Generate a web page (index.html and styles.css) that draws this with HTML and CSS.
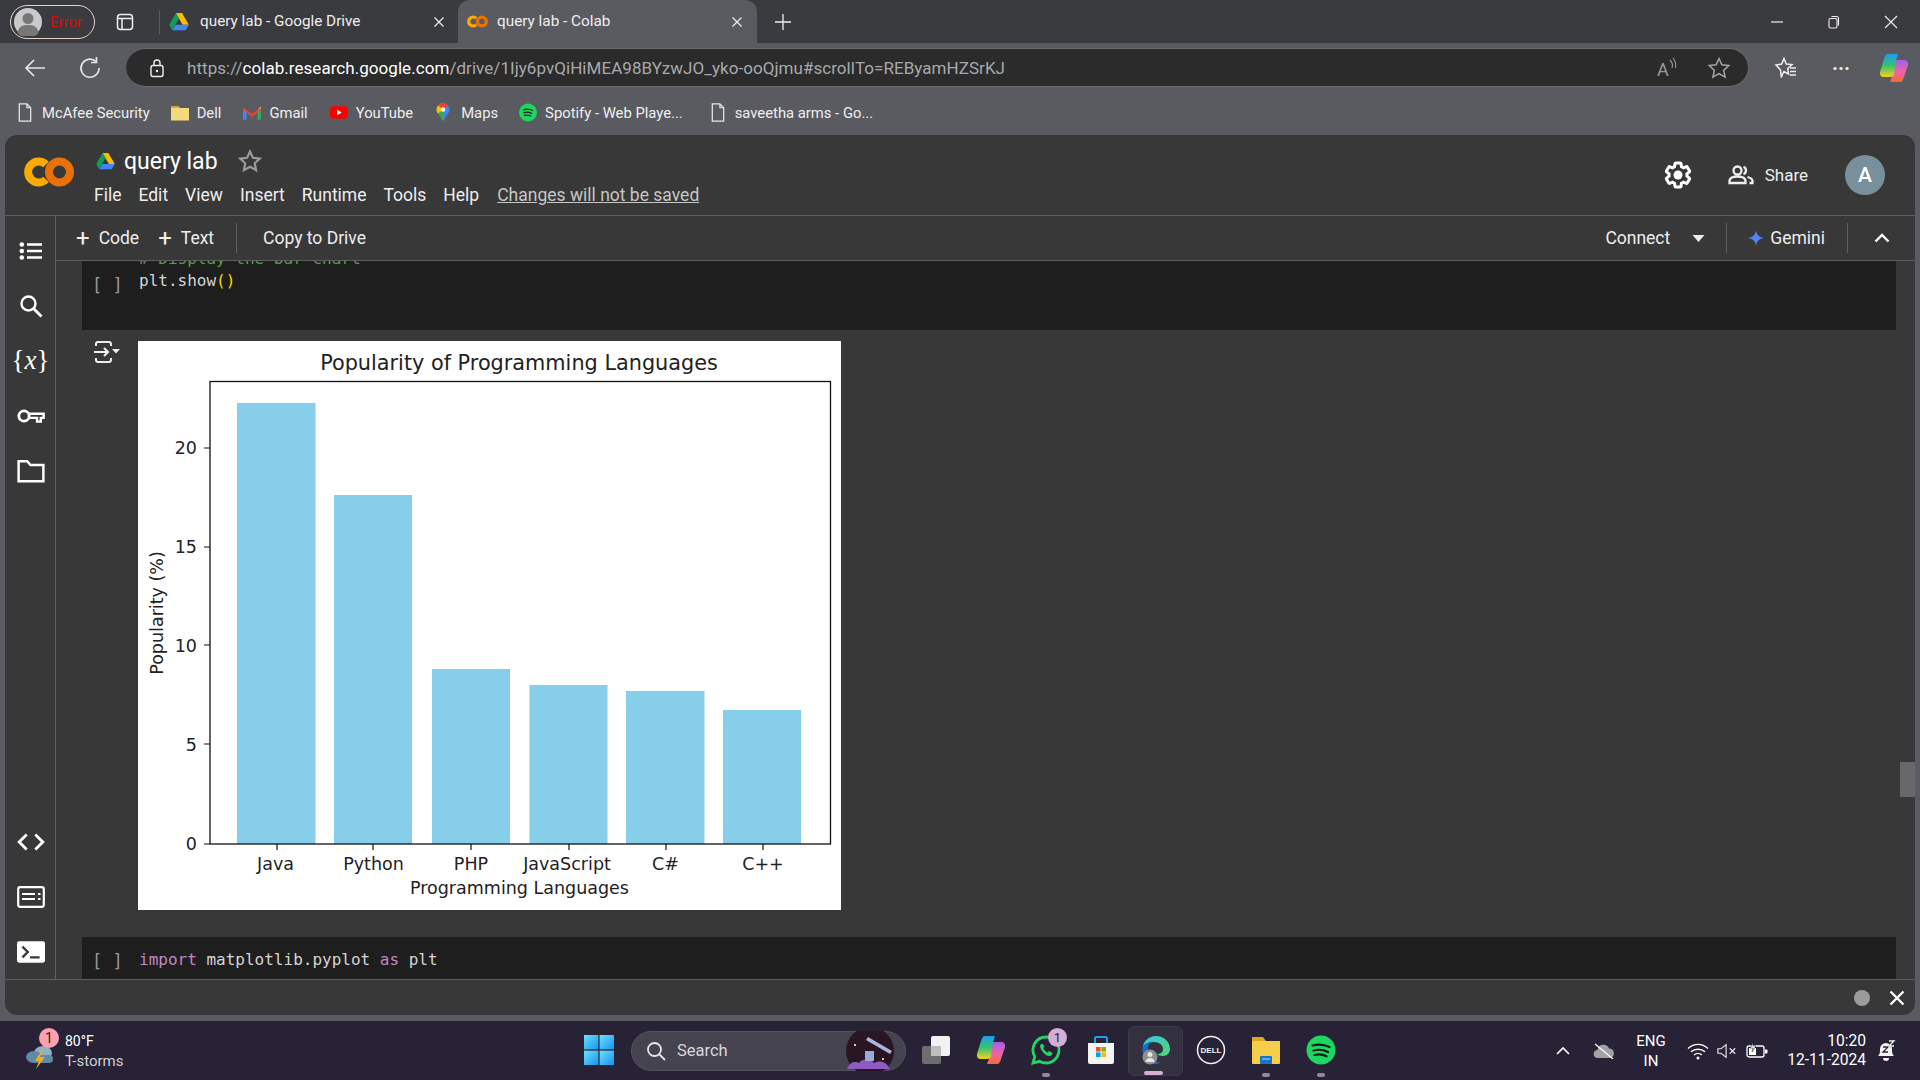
FILE: index.html
```html
<!DOCTYPE html>
<html lang="en">
<head>
  <meta charset="UTF-8" />
  <title>query lab - Colab</title>
  <link rel="stylesheet" href="styles.css">
</head>
<body>
  <svg class="defs" width="0" height="0">
    <defs>
      <linearGradient id="copilotA" x1="0" y1="0" x2="0" y2="1">
        <stop offset="0" stop-color="#1c9cf0"/><stop offset=".5" stop-color="#35c46a"/><stop offset="1" stop-color="#f5d020"/>
      </linearGradient>
      <linearGradient id="copilotB" x1="0" y1="0" x2="0" y2="1">
        <stop offset="0" stop-color="#a45de8"/><stop offset=".55" stop-color="#f063a8"/><stop offset="1" stop-color="#f56a2c"/>
      </linearGradient>
      <linearGradient id="edgeA" x1="0" y1="0" x2="1" y2="1">
        <stop offset="0" stop-color="#34c6e8"/><stop offset="1" stop-color="#52d66c"/>
      </linearGradient>
      <linearGradient id="winA" x1="0" y1="0" x2="1" y2="1">
        <stop offset="0" stop-color="#6fe0fb"/><stop offset="1" stop-color="#1593f0"/>
      </linearGradient>
      <symbol id="drive" viewBox="0 0 24 22">
        <path d="M8.2 0h7.6l8.2 14.3h-7.6z" fill="#fbbc04"/>
        <path d="M8.2 0 0 14.3l3.8 6.7L12 6.7z" fill="#0f9d58"/>
        <path d="M3.8 21h16.4l3.8-6.7H8z" fill="#4285f4"/>
      </symbol>
      <symbol id="colab" viewBox="0 0 50 30">
        <path d="M22 7.500A10.500 10.500 0 1 0 22 22.500" fill="none" stroke="#f9ab00" stroke-width="8"/>
        <circle cx="35.500" cy="15" r="10.500" fill="none" stroke="#e8710a" stroke-width="8"/>
      </symbol>
      <symbol id="page" viewBox="0 0 16 20">
        <path d="M2 1h8l4 4v14H2z" fill="none" stroke="#e8e8e8" stroke-width="1.300"/>
        <path d="M10 1v4h4" fill="none" stroke="#e8e8e8" stroke-width="1.300"/>
      </symbol>
      <symbol id="copilot" viewBox="0 0 30 30">
        <path d="M21 29H11c1-2 2-5 2.500-9L15 9c.5-1.500 2-2 4-2h6c3 0 4.500 2 4 5l-4 12c-.8 3-2 5-4 5z" fill="url(#copilotB)"/>
        <path d="M9 1h10c-1 3-2 6-2.500 10L15 22c-.5 1-2 2-4 2H5c-3 0-4.500-2-4-5L5 6c.8-3 2-5 4-5z" fill="url(#copilotA)"/>
      </symbol>
    </defs>
  </svg>

  <div class="tabstrip">
    <div class="profile-pill">
      <svg class="avatar-mini" viewBox="0 0 28 28"><circle cx="14" cy="14" r="14" fill="#c9c9c9"/><circle cx="14" cy="10.500" r="5.500" fill="#777"/><path d="M3.500 25c1-7 5.500-8 10.500-8s9.500 1 10.500 8a14 14 0 0 1-21 0z" fill="#777"/></svg>
      <span class="profile-error">Error</span>
    </div>
    <svg class="tab-actions" viewBox="0 0 18 18"><rect x="1.500" y="1.500" width="15" height="15" rx="3" fill="none" stroke="#eee" stroke-width="1.500"/><path d="M1.500 5.500h15M6 5.500v11" stroke="#eee" stroke-width="1.500"/></svg>
    <span class="tab-divider"></span>
    <div class="tab">
      <svg class="tab-icon"><use href="#drive"/></svg>
      <span class="tab-title">query lab - Google Drive</span>
      <svg class="tab-close" viewBox="0 0 12 12"><path d="M1.500 1.500l9 9m0-9l-9 9" stroke="#eee" stroke-width="1.200"/></svg>
    </div>
    <div class="tab tab-active">
      <svg class="tab-icon tab-icon-co"><use href="#colab"/></svg>
      <span class="tab-title">query lab - Colab</span>
      <svg class="tab-close" viewBox="0 0 12 12"><path d="M1.500 1.500l9 9m0-9l-9 9" stroke="#eee" stroke-width="1.200"/></svg>
    </div>
    <svg class="tab-new" viewBox="0 0 18 18"><path d="M9 1v16M1 9h16" stroke="#eee" stroke-width="1.300"/></svg>
    <div class="win-controls">
      <svg viewBox="0 0 14 14"><path d="M1 7h12" stroke="#eee" stroke-width="1.200"/></svg>
      <svg viewBox="0 0 14 14"><rect x="2" y="3.500" width="8" height="9.500" rx="1.500" fill="none" stroke="#eee" stroke-width="1.100"/><path d="M4.500 1.500h5a2 2 0 0 1 2 2v7" fill="none" stroke="#eee" stroke-width="1.100"/></svg>
      <svg viewBox="0 0 14 14"><path d="M1 1l12 12m0-12L1 13" stroke="#eee" stroke-width="1.100"/></svg>
    </div>
  </div>

  <div class="addressbar">
    <svg class="nav-back" viewBox="0 0 24 24"><path d="M22 12H3m8-8l-8 8 8 8" fill="none" stroke="#e6e6e6" stroke-width="1.700"/></svg>
    <svg class="nav-reload" viewBox="0 0 24 24"><path d="M18 5.500A9 9 0 1 0 21 12" fill="none" stroke="#e6e6e6" stroke-width="1.700"/><path d="M18.500 1v5.500H13" fill="none" stroke="#e6e6e6" stroke-width="1.700"/></svg>
    <div class="url-pill">
      <svg class="url-lock" viewBox="0 0 16 20"><rect x="2" y="7.500" width="12" height="11" rx="2" fill="none" stroke="#eee" stroke-width="1.400"/><path d="M5 7.500V5a3 3 0 0 1 6 0v2.500" fill="none" stroke="#eee" stroke-width="1.400"/><circle cx="8" cy="13" r="1.200" fill="#eee"/></svg>
      <span class="url-text">https://<b>colab.research.google.com</b>/drive/1Ijy6pvQiHiMEA98BYzwJO_yko-ooQjmu#scrollTo=REByamHZSrKJ</span>
      <svg class="url-read" viewBox="0 0 22 22"><text x="1" y="19" class="read-a">A</text><path d="M14 3c2 2 3 5 2 8M17 1c2.500 3 3.500 6 2.500 10" fill="none" stroke="#9a9a9a" stroke-width="1.100"/></svg>
      <svg class="url-star" viewBox="0 0 24 24"><path d="M12 2.500l2.900 6.300 6.900.8-5.100 4.700 1.400 6.800-6.100-3.400-6.100 3.400 1.400-6.800L2.200 9.600l6.900-.8z" fill="none" stroke="#a8a8a8" stroke-width="1.500"/></svg>
    </div>
    <svg class="bar-fav" viewBox="0 0 24 24"><path d="M10 2.500l2.300 5.500 5.700.6-4.300 3.900.9 5.600L10 15.500l-2 3.500-.7 2.500L6.500 14 2 9l5.700-1z" fill="none" stroke="#eee" stroke-width="1.500"/><path d="M16 12h6m-6 3.500h6m-6 3.500h6" stroke="#eee" stroke-width="1.500"/></svg>
    <span class="bar-more">···</span>
    <svg class="bar-copilot"><use href="#copilot"/></svg>
  </div>

  <div class="bookmarks">
    <span class="bookmark bm-mcafee"><svg class="bm-icon"><use href="#page"/></svg>McAfee Security</span>
    <span class="bookmark bm-dell"><svg class="bm-icon" viewBox="0 0 20 18"><path d="M0 2h8l2 2h10v14H0z" fill="#f4d97a"/><path d="M0 2h8l1 2H0z" fill="#d8a93a"/></svg>Dell</span>
    <span class="bookmark bm-gmail"><svg class="bm-icon" viewBox="0 0 20 16"><path d="M0 3v13h4V6z" fill="#4285f4"/><path d="M20 3v13h-4V6z" fill="#34a853"/><path d="M0 2l10 8 10-8v3l-10 8L0 5z" fill="#ea4335"/><path d="M16 6l4-3V1z" fill="#fbbc04"/></svg>Gmail</span>
    <span class="bookmark bm-yt"><svg class="bm-icon" viewBox="0 0 20 16"><rect y="1" width="20" height="14" rx="4" fill="#f00"/><path d="M8 5l5 3-5 3z" fill="#fff"/></svg>YouTube</span>
    <span class="bookmark bm-maps"><svg class="bm-icon" viewBox="0 0 16 22"><path d="M8 0a7.500 7.500 0 0 1 7.500 7.500c0 2-.8 3.400-1.800 4.800L8 21z" fill="#4285f4"/><path d="M8 0A7.500 7.500 0 0 0 .5 7.500c0 2 .8 3.400 1.800 4.800L8 21z" fill="#34a853"/><path d="M2.600 2.500L8 7.500l-5.700 4.800C1.300 10.900.5 9.500.5 7.500c0-2 .8-3.600 2.100-5z" fill="#fbbc04"/><path d="M8 0c2.500 0 4.700 1.200 6 3L8 7.500 2.600 2.500C4 1 5.900 0 8 0z" fill="#ea4335"/><circle cx="8" cy="7.500" r="2.600" fill="#fff"/></svg>Maps</span>
    <span class="bookmark bm-spotify"><svg class="bm-icon" viewBox="0 0 20 20"><circle cx="10" cy="10" r="10" fill="#1ed760"/><path d="M4.500 7c3.500-1 8-.7 11 1M5 10.300c3-.8 7-.5 9.500 1M5.500 13.300c2.500-.6 5.800-.4 8 .9" fill="none" stroke="#2a2a2a" stroke-width="1.500"/></svg>Spotify - Web Playe...</span>
    <span class="bookmark bm-doc"><svg class="bm-icon"><use href="#page"/></svg>saveetha arms - Go...</span>
  </div>

  <div class="colab">
    <header class="colab-header">
      <svg class="colab-logo"><use href="#colab"/></svg>
      <div class="doc-info">
        <div class="doc-title-row">
          <svg class="doc-drive"><use href="#drive"/></svg>
          <span class="doc-title">query lab</span>
          <svg class="doc-star" viewBox="0 0 24 24"><path d="M12 2.500l2.900 6.300 6.900.8-5.100 4.700 1.400 6.800-6.100-3.400-6.100 3.400 1.400-6.800L2.200 9.600l6.900-.8z" fill="none" stroke="#9a9a9a" stroke-width="2.200"/></svg>
        </div>
        <nav class="menu">
          <span>File</span><span>Edit</span><span>View</span><span>Insert</span><span>Runtime</span><span>Tools</span><span>Help</span>
          <a class="menu-note">Changes will not be saved</a>
        </nav>
      </div>
      <div class="header-right">
        <svg class="gear" viewBox="0 0 24 24"><path d="M19.14,12.94c0.04-0.3,0.06-0.61,0.06-0.94c0-0.32-0.02-0.64-0.07-0.94l2.03-1.58c0.18-0.14,0.23-0.41,0.12-0.61l-1.92-3.32c-0.12-0.22-0.37-0.29-0.59-0.22l-2.39,0.96c-0.5-0.38-1.03-0.7-1.62-0.94L14.4,2.81c-0.04-0.24-0.24-0.41-0.48-0.41h-3.84c-0.24,0-0.43,0.17-0.47,0.41L9.25,5.35C8.66,5.59,8.12,5.92,7.63,6.29L5.24,5.33c-0.22-0.08-0.47,0-0.59,0.22L2.74,8.87C2.62,9.08,2.66,9.34,2.86,9.48l2.03,1.58C4.84,11.36,4.8,11.69,4.8,12s0.02,0.64,0.07,0.94l-2.03,1.58c-0.18,0.14-0.23,0.41-0.12,0.61l1.92,3.32c0.12,0.22,0.37,0.29,0.59,0.22l2.39-0.96c0.5,0.38,1.03,0.7,1.62,0.94l0.36,2.54c0.05,0.24,0.24,0.41,0.48,0.41h3.84c0.24,0,0.44-0.17,0.47-0.41l0.36-2.54c0.59-0.24,1.13-0.56,1.62-0.94l2.39,0.96c0.22,0.08,0.47,0,0.59-0.22l1.92-3.32c0.12-0.22,0.07-0.47-0.12-0.61L19.14,12.94z" fill="none" stroke="#fff" stroke-width="2.400"/><circle cx="12" cy="12" r="3.600" fill="#fff"/></svg>
        <svg class="people" viewBox="0 0 26 20"><circle cx="9.500" cy="5.500" r="4" fill="none" stroke="#eee" stroke-width="2.300"/><path d="M1.500 18v-2c0-3 4-4.500 8-4.500s8 1.500 8 4.500v2z" fill="none" stroke="#eee" stroke-width="2.300"/><path d="M15.500 1.800a4 4 0 0 1 0 7.400M19.500 12c2.500.7 5 2 5 4v2h-3" fill="none" stroke="#eee" stroke-width="2.300"/></svg>
        <span class="share-label">Share</span>
        <span class="avatar">A</span>
      </div>
    </header>

    <div class="colab-main">
      <aside class="sidebar">
        <div class="side-group">
          <div class="side-slot"><svg viewBox="0 0 24 24"><path d="M8 5.500h15M8 12h15M8 18.500h15" stroke="#fff" stroke-width="2.400"/><circle cx="2.800" cy="5.500" r="2.300" fill="#fff"/><circle cx="2.800" cy="12" r="2.300" fill="#fff"/><circle cx="2.800" cy="18.500" r="2.300" fill="#fff"/></svg></div>
          <div class="side-slot"><svg viewBox="0 0 24 24"><circle cx="9.500" cy="9.500" r="7" fill="none" stroke="#fff" stroke-width="2.400"/><path d="M14.500 14.500l8 8" stroke="#fff" stroke-width="2.800"/></svg></div>
          <div class="side-slot side-var">{<i>x</i>}</div>
          <div class="side-slot"><svg viewBox="0 0 30 18"><circle cx="7.500" cy="9" r="5.500" fill="none" stroke="#fff" stroke-width="3"/><path d="M13 6.500h15.500v4.500h-3v4h-4v-4H13" fill="none" stroke="#fff" stroke-width="2.600"/></svg></div>
          <div class="side-slot"><svg viewBox="0 0 26 22"><path d="M1.500 2h8l3 3.500h12v15h-23z" fill="none" stroke="#fff" stroke-width="2.300"/></svg></div>
        </div>
        <div class="side-group">
          <div class="side-slot"><svg viewBox="0 0 26 18"><path d="M9 2L2 9l7 7M17 2l7 7-7 7" fill="none" stroke="#fff" stroke-width="2.600"/></svg></div>
          <div class="side-slot"><svg viewBox="0 0 28 22"><rect x="1.200" y="1.200" width="25.600" height="19.600" rx="2" fill="none" stroke="#fff" stroke-width="2.200"/><path d="M5 8h13M5 13h13M21 8h2.500M21 13h2.500" stroke="#fff" stroke-width="2.200"/></svg></div>
          <div class="side-slot"><svg viewBox="0 0 26 20"><rect width="26" height="20" rx="2" fill="#fff"/><path d="M5 5l5 5-5 5" fill="none" stroke="#383838" stroke-width="2.200"/><path d="M12 15h9" stroke="#383838" stroke-width="2.200"/></svg></div>
        </div>
      </aside>

      <div class="workspace">
        <div class="toolbar">
          <span class="tool tool-code"><i class="plus">+</i>Code</span>
          <span class="tool tool-text"><i class="plus">+</i>Text</span>
          <span class="tool-sep tool-sep-left"></span>
          <span class="tool tool-drive">Copy to Drive</span>
          <span class="tool tool-connect">Connect</span>
          <svg class="tool-caret" viewBox="0 0 12 7"><path d="M0 0h12L6 7z" fill="#eee"/></svg>
          <span class="tool-sep tool-sep-a"></span>
          <svg class="tool-spark" viewBox="0 0 16 16"><path d="M8 0c.6 4.500 2.500 7 8 8-5.500 1-7.400 3.500-8 8-.6-4.500-2.500-7-8-8 5.500-1 7.400-3.500 8-8z" fill="#4f86f7"/></svg>
          <span class="tool tool-gemini">Gemini</span>
          <span class="tool-sep tool-sep-b"></span>
          <svg class="tool-chevron" viewBox="0 0 16 10"><path d="M1.500 8.500L8 2l6.500 6.500" fill="none" stroke="#fff" stroke-width="2.400"/></svg>
        </div>

        <div class="notebook">
          <div class="cell cell-first">
            <div class="gutter">[ ]</div>
            <pre class="code code-scrolled"><span class="c-comment"># Display the bar chart</span>
plt.show<span class="c-paren">()</span></pre>
          </div>

          <div class="output">
            <div class="output-gutter">
              <svg viewBox="0 0 28 22"><path d="M3 5V3a2 2 0 0 1 2-2h11a2 2 0 0 1 2 2v2M3 17v2a2 2 0 0 0 2 2h11a2 2 0 0 0 2-2v-2" fill="none" stroke="#eee" stroke-width="2.100"/><path d="M1 11h14m-4-4l4 4-4 4" fill="none" stroke="#eee" stroke-width="2.100"/><path d="M19 8h8l-4 4.500z" fill="#eee"/></svg>
            </div>
            <svg class="chart" viewBox="138 341 703 569">
              <rect x="138" y="341" width="703" height="569" fill="#fff"/>
              <g fill="#87ceeb">
                <rect x="237" y="403" width="78.500" height="441"/>
                <rect x="334" y="495" width="78" height="349"/>
                <rect x="432" y="669" width="78" height="175"/>
                <rect x="529.500" y="685" width="78" height="159"/>
                <rect x="626" y="691" width="78.500" height="153"/>
                <rect x="723" y="710" width="78" height="134"/>
              </g>
              <rect x="210" y="381.500" width="620.500" height="462.500" fill="none" stroke="#111" stroke-width="1.300"/>
              <g stroke="#111" stroke-width="1.200">
                <path d="M204 448h6M204 547h6M204 645h6M204 744h6M204 844h6"/>
                <path d="M277 844v6M373 844v6M471 844v6M569 844v6M666 844v6M763 844v6"/>
              </g>
              <text class="chart-title" x="519" y="370">Popularity of Programming Languages</text>
              <g class="chart-y">
                <text x="197" y="454">20</text>
                <text x="197" y="553">15</text>
                <text x="197" y="652">10</text>
                <text x="197" y="751">5</text>
                <text x="197" y="850">0</text>
              </g>
              <g class="chart-x">
                <text x="275.500" y="870">Java</text>
                <text x="373.500" y="870">Python</text>
                <text x="471" y="870">PHP</text>
                <text x="567" y="870">JavaScript</text>
                <text x="665.500" y="870">C#</text>
                <text x="763" y="870">C++</text>
              </g>
              <text class="chart-xlabel" x="519.500" y="894">Programming Languages</text>
              <text class="chart-ylabel" transform="translate(163 613) rotate(-90)">Popularity (%)</text>
            </svg>
          </div>

          <div class="cell cell-last">
            <div class="gutter">[ ]</div>
            <pre class="code"><span class="c-key">import</span> matplotlib.pyplot <span class="c-key">as</span> plt</pre>
          </div>

          <div class="scroll-thumb"></div>
        </div>
      </div>
    </div>

    <footer class="statusbar">
      <span class="status-dot"></span>
      <svg class="status-close" viewBox="0 0 16 16"><path d="M1.500 1.500l13 13m0-13l-13 13" stroke="#fff" stroke-width="2.300"/></svg>
    </footer>
  </div>

  <div class="taskbar">
    <div class="weather">
      <svg class="weather-icon" viewBox="0 0 30 30"><ellipse cx="18" cy="13" rx="9" ry="7" fill="#8fb0c9"/><ellipse cx="9" cy="17" rx="8" ry="6" fill="#5f8aa8"/><rect x="6" y="15" width="22" height="8" rx="4" fill="#5f8aa8"/><path d="M17 10l-7 11h4l-3 8 9-12h-5l3-7z" fill="#f7a81b"/></svg>
      <span class="weather-badge">1</span>
      <div class="weather-text"><span class="weather-temp">80°F</span><span class="weather-desc">T-storms</span></div>
    </div>
    <div class="task-slot task-start">
      <svg viewBox="0 0 30 30"><rect width="14.400" height="14.400" x="0" y="0" fill="url(#winA)"/><rect width="14.400" height="14.400" x="15.600" y="0" fill="url(#winA)"/><rect width="14.400" height="14.400" x="0" y="15.600" fill="url(#winA)"/><rect width="14.400" height="14.400" x="15.600" y="15.600" fill="url(#winA)"/></svg>
    </div>
    <div class="task-search">
      <svg class="search-icon" viewBox="0 0 20 20"><circle cx="8.500" cy="8.500" r="6.500" fill="none" stroke="#e6e6e6" stroke-width="1.800"/><path d="M13 13l6 6" stroke="#e6e6e6" stroke-width="1.800"/></svg>
      <span class="search-label">Search</span>
      <svg class="search-art" viewBox="0 0 54 40"><circle cx="27" cy="20" r="24" fill="#2a1622"/><path d="M4 38c3-8 9-8 12-6 4-5 12-4 15 0 5-3 12-2 16 6z" fill="#8d5cc0"/><path d="M25 6l24 14-2 3L23 9z" fill="#a9b6dd"/><rect x="22" y="20" width="9" height="10" fill="#9aa9d8"/><circle cx="12" cy="14" r="1" fill="#fff"/><circle cx="40" cy="28" r="1" fill="#fff"/></svg>
    </div>
    <div class="task-slot">
      <svg viewBox="0 0 30 30"><rect x="1" y="11" width="19" height="18" rx="2" fill="#6d6d6d"/><rect x="10" y="1" width="19" height="20" rx="2" fill="#f2f2f2"/><rect x="10" y="11" width="10" height="10" fill="#bdbdbd"/></svg>
    </div>
    <div class="task-slot"><svg><use href="#copilot"/></svg></div>
    <div class="task-slot task-open">
      <svg viewBox="0 0 30 30"><path d="M15 2a13 13 0 0 1 0 26 13 13 0 0 1-6.500-1.700L2 28l1.800-6.400A13 13 0 0 1 15 2z" fill="none" stroke="#25d366" stroke-width="2.800"/><path d="M10 9c-1.500 1.500-1 4 1 7s5 5 7.500 5c2 0 3-1.500 3-3l-3.500-2-1.500 1.500c-2-1-3.500-2.700-4.300-4.500L13.500 11.500 12 9z" fill="#25d366"/></svg>
      <span class="task-badge">1</span>
    </div>
    <div class="task-slot">
      <svg viewBox="0 0 30 30"><path d="M9 8V3.500A1.500 1.500 0 0 1 10.500 2h9A1.500 1.500 0 0 1 21 3.500V8" fill="none" stroke="#1aa3e8" stroke-width="2"/><path d="M2 8h26v19a2 2 0 0 1-2 2H4a2 2 0 0 1-2-2z" fill="#f4f4f4"/><rect x="10" y="12" width="4.600" height="4.600" fill="#f25022"/><rect x="15.400" y="12" width="4.600" height="4.600" fill="#7fba00"/><rect x="10" y="17.400" width="4.600" height="4.600" fill="#00a4ef"/><rect x="15.400" y="17.400" width="4.600" height="4.600" fill="#ffb900"/></svg>
    </div>
    <div class="task-slot task-edge">
      <svg viewBox="0 0 30 30"><path d="M15 1c8 0 14 6 14 13 0 4-3 7-7 7-3 0-5-1-6-2 4 0 6-2 6-5 0-4-4-7-9-7C7 7 2 10 1.500 14 2 6 8 1 15 1z" fill="url(#edgeA)"/><path d="M1.500 14C2 9 7 7 11 7c-4 2-5 6-4 11 1 5 6 10 13 9-2 1-3.500 2-6 2C7 29 1 22 1.500 14z" fill="#1471c9"/><circle cx="9" cy="22" r="7.500" fill="#8f8f8f"/><circle cx="9" cy="19.500" r="2.500" fill="#e6e6e6"/><path d="M4.500 27c.5-3 2-4 4.500-4s4 1 4.500 4z" fill="#e6e6e6"/></svg>
    </div>
    <div class="task-slot">
      <svg viewBox="0 0 30 30"><circle cx="15" cy="15" r="13.500" fill="none" stroke="#f2f2f2" stroke-width="1.500"/><text x="15" y="18" class="dell-text">DELL</text></svg>
    </div>
    <div class="task-slot task-open">
      <svg viewBox="0 0 30 30"><path d="M1 2h11l3 4h14v3H1z" fill="#e3a51a"/><rect x="1" y="6" width="28" height="23" rx="1" fill="#f6cf4a"/><rect x="9" y="21" width="12" height="8" rx="1" fill="#1576c9"/><path d="M11 24h8" stroke="#9fd0f5" stroke-width="1.200"/></svg>
    </div>
    <div class="task-slot task-open">
      <svg viewBox="0 0 30 30"><circle cx="15" cy="15" r="14.500" fill="#1ed760"/><path d="M6.500 10.500c5.500-1.500 12-1 17 1.500M7.500 15.500c4.500-1.200 10-.8 14.500 1.500M8.500 20c4-1 8.500-.6 12 1.300" fill="none" stroke="#1b1b1b" stroke-width="2.200" stroke-linecap="round"/></svg>
    </div>

    <div class="tray">
      <svg class="tray-chevron" viewBox="0 0 14 9"><path d="M1 8l6-6 6 6" fill="none" stroke="#fff" stroke-width="1.600"/></svg>
      <svg class="tray-cloud" viewBox="0 0 22 16"><path d="M5 15a4 4 0 0 1-.5-8A6 6 0 0 1 16 5.500 4.800 4.800 0 0 1 17 15z" fill="#a2a2a6"/><path d="M2 1l18 15" stroke="#fff" stroke-width="1.200"/></svg>
      <div class="tray-lang"><span>ENG</span><span>IN</span></div>
      <svg class="tray-wifi" viewBox="0 0 22 18"><path d="M1 6.500c6-5.500 14-5.500 20 0M4 9.800c4-3.500 10-3.500 14 0M7 13c2.500-2 5.500-2 8 0" fill="none" stroke="#fff" stroke-width="1.400"/><circle cx="11" cy="16" r="1.500" fill="#fff"/></svg>
      <svg class="tray-vol" viewBox="0 0 22 16"><path d="M1 5.500h3.500L10 1v14l-5.500-4.500H1z" fill="none" stroke="#e6e6e6" stroke-width="1.300"/><path d="M14 5l6 6m0-6l-6 6" stroke="#e6e6e6" stroke-width="1.300"/></svg>
      <svg class="tray-batt" viewBox="0 0 22 16"><rect x="1" y="3" width="17" height="11" rx="2" fill="none" stroke="#fff" stroke-width="1.300"/><rect x="3" y="5" width="7" height="7" fill="#fff"/><path d="M19 6.500h1.500a1 1 0 0 1 1 1v2a1 1 0 0 1-1 1H19z" fill="#fff"/><path d="M7 0L4 5h3l-1 4 4-6H7z" fill="#fff" stroke="#272235" stroke-width=".6"/></svg>
      <div class="tray-clock"><span>10:20</span><span>12-11-2024</span></div>
      <svg class="tray-bell" viewBox="0 0 20 22"><path d="M2 16c2-2 2-4 2-7a6 6 0 0 1 12 0c0 3 0 5 2 7z" fill="#f4f4f4"/><path d="M7 18h6a3 3 0 0 1-6 0z" fill="#f4f4f4"/><path d="M7 7h5l-5 5h5M13 1h5l-5 5h5" fill="none" stroke="#272235" stroke-width="1.300"/><path d="M13 1h5l-5 5h5" fill="none" stroke="#f4f4f4" stroke-width="1.300"/></svg>
    </div>
  </div>
</body>
</html>
```

FILE: styles.css
```css
* { box-sizing: border-box; }
html, body { margin: 0; height: 100%; }
body { width: 1920px; height: 1080px; overflow: hidden; display: flex; flex-direction: column; background: #5a5b60; font-family: Roboto, "Liberation Sans", sans-serif; color: #eee; }
svg { display: block; flex: none; }
.defs { position: absolute; }

/* browser tabs */
.tabstrip { height: 43px; flex: none; display: flex; align-items: center; background: #3a3b3f; padding-left: 10px; }
.profile-pill { width: 85px; height: 34px; border: 1px solid #e7d3c6; border-radius: 17px; display: flex; align-items: center; padding-left: 3px; }
.avatar-mini { width: 28px; height: 28px; }
.profile-error { margin-left: 8px; color: #d40d0d; font-size: 15px; }
.tab-actions { width: 18px; height: 18px; margin-left: 21px; }
.tab-divider { width: 1px; height: 24px; background: #5a5b60; margin-left: 25px; }
.tab { width: 299px; height: 43px; display: flex; align-items: center; position: relative; }
.tab-icon { width: 20px; height: 18px; margin-left: 9px; }
.tab-icon-co { width: 21px; height: 13px; }
.tab-title { font-size: 15.300px; margin: -2px 0 0 11px; flex: 1; }
.tab-close { width: 12px; height: 12px; margin-right: 14px; }
.tab-active { background: #5a5b60; border-radius: 12px 12px 0 0; height: 43px; margin-left: -1px; }
.tab-active .tab-title { margin-left: 9px; }
.tab-new { width: 18px; height: 18px; margin-left: 17px; }
.win-controls { margin-left: auto; display: flex; align-items: center; gap: 43px; padding-right: 22px; }
.win-controls svg { width: 14px; height: 14px; }

/* address bar */
.addressbar { height: 49px; flex: none; display: flex; align-items: center; }
.nav-back { width: 24px; height: 24px; margin-left: 23px; }
.nav-reload { width: 24px; height: 24px; margin-left: 31px; }
.url-pill { width: 1623px; height: 39px; margin-left: 24px; border-radius: 20px; background: #2b2b2b; border: 1px solid #6a6a6a; border-width: 1px 1px 1px 0; display: flex; align-items: center; padding-left: 23px; }
.url-lock { width: 16px; height: 20px; }
.url-text { margin-left: 22px; font-size: 17px; color: #a7a9ad; flex: 1; white-space: nowrap; letter-spacing: .05px; }
.url-text b { font-weight: 400; color: #fff; }
.url-read { width: 22px; height: 22px; margin-right: 29px; }
.read-a { font: 18px Roboto, sans-serif; fill: #9a9a9a; }
.url-star { width: 24px; height: 24px; margin-right: 17px; }
.bar-fav { width: 24px; height: 24px; margin-left: 25px; }
.bar-more { width: 24px; margin-left: 31px; font-size: 20px; font-weight: 700; text-align: center; }
.bar-copilot { width: 30px; height: 30px; margin-left: 26px; }

/* bookmarks */
.bookmarks { height: 43px; flex: none; display: flex; align-items: center; padding: 0 0 2px 16px; font-size: 14.800px; }
.bookmark { display: flex; align-items: center; white-space: nowrap; }
.bm-icon { width: 18px; height: 19px; margin-right: 8px; }
.bm-dell { margin-left: 21px; }
.bm-gmail { margin-left: 22px; }
.bm-yt { margin-left: 22px; }
.bm-maps { margin-left: 23px; }
.bm-spotify { margin-left: 21px; }
.bm-doc { margin-left: 26px; }
.bm-maps .bm-icon { width: 14px; margin-right: 11px; }

/* colab card */
.colab { height: 880px; flex: none; margin: 0 5px 6px; background: #383838; border-radius: 12px; display: flex; flex-direction: column; overflow: hidden; }
.colab-header { height: 81px; flex: none; display: flex; border-bottom: 1px solid #5f5f5f; padding-left: 19px; }
.colab-logo { width: 50px; height: 30px; margin-top: 22px; }
.doc-info { margin-left: 20px; }
.doc-title-row { display: flex; align-items: center; height: 24px; margin-top: 14px; }
.doc-drive { width: 19px; height: 17px; margin-left: 2px; }
.doc-title { font-size: 23px; margin-left: 9px; color: #fff; }
.doc-star { width: 24px; height: 24px; margin-left: 20px; }
.menu { display: flex; align-items: center; margin-top: 12px; font-size: 17.500px; gap: 17px; }
.menu-note { color: #c4c7c5; text-decoration: underline; margin-left: 1px; }
.header-right { margin-left: auto; display: flex; align-items: center; padding-right: 30px; height: 80px; }
.gear { width: 30px; height: 30px; }
.people { width: 26px; height: 20px; margin-left: 35px; }
.share-label { font-size: 17px; margin-left: 11px; }
.avatar { width: 40px; height: 40px; border-radius: 50%; background: #78909c; margin-left: 37px; color: #fff; font-size: 21px; font-weight: 500; display: flex; align-items: center; justify-content: center; }

.colab-main { flex: 1; display: flex; min-height: 0; }
.sidebar { width: 51px; flex: none; border-right: 1px solid #5f5f5f; display: flex; flex-direction: column; justify-content: space-between; padding: 7px 0 0 1px; }
.side-slot { height: 55px; display: flex; align-items: center; justify-content: center; }
.side-slot svg { width: 28px; height: 24px; }
.side-var { font: 27px "Liberation Serif", serif; color: #fff; }

.workspace { flex: 1; min-width: 0; display: flex; flex-direction: column; }
.toolbar { height: 45px; flex: none; display: flex; align-items: center; border-bottom: 1px solid #5f5f5f; font-size: 17.500px; }
.tool { display: flex; align-items: center; white-space: nowrap; }
.plus { font-style: normal; font-size: 24px; font-weight: 400; margin-right: 9px; line-height: 1; }
.tool-code { margin-left: 20px; }
.tool-text { margin-left: 19px; }
.tool-sep { width: 1px; height: 30px; background: #5f5f5f; }
.tool-sep-left { margin-left: 22px; }
.tool-drive { margin-left: 26px; }
.tool-connect { margin-left: auto; }
.tool-caret { width: 13px; height: 7px; margin-left: 22px; }
.tool-sep-a { margin-left: 21px; }
.tool-spark { width: 16px; height: 16px; margin-left: 21px; }
.tool-gemini { margin-left: 6px; }
.tool-sep-b { margin-left: 22px; }
.tool-chevron { width: 16px; height: 10px; margin-left: 26px; margin-right: 25px; }

/* notebook */
.notebook { flex: 1; min-height: 0; padding: 0 19px 0 26px; position: relative; display: flex; flex-direction: column; }
.cell { background: #1e1e1e; display: flex; overflow: hidden; }
.cell-first { height: 69px; }
.cell-last { height: 42px; }
.gutter { width: 57px; flex: none; padding: 13px 0 0 10px; font: 17px/22px "DejaVu Sans Mono", monospace; color: #9a9a9a; white-space: pre; }
.code { margin: 0; padding-top: 12px; font: 16px/22px "DejaVu Sans Mono", monospace; color: #d4d4d4; }
.code-scrolled { margin-top: -25px; }
.c-comment { color: #5c9a4f; }
.c-paren { color: #ffd700; }
.c-key { color: #c586c0; }
.output { height: 607px; flex: none; display: flex; padding-top: 11px; }
.output-gutter { width: 56px; flex: none; padding: 0 0 0 11px; }
.output-gutter svg { width: 28px; height: 22px; }
.chart { width: 703px; height: 569px; }
.chart text { font-family: "DejaVu Sans", sans-serif; fill: #222; }
.chart-title { font-size: 20.800px; text-anchor: middle; }
.chart-y text { font-size: 17.500px; text-anchor: end; }
.chart-x text { font-size: 17.500px; text-anchor: middle; }
.chart-xlabel { font-size: 17.500px; text-anchor: middle; }
.chart-ylabel { font-size: 17.500px; text-anchor: middle; }
.scroll-thumb { position: absolute; right: 0; top: 501px; width: 15px; height: 35px; background: #686868; }

.statusbar { height: 36px; flex: none; border-top: 1px solid #5f5f5f; display: flex; align-items: center; justify-content: flex-end; padding-right: 10px; }
.status-dot { width: 16px; height: 16px; border-radius: 50%; background: #9c9c9c; margin-right: 19px; }
.status-close { width: 16px; height: 16px; }

/* windows taskbar */
.taskbar { height: 59px; flex: none; display: flex; align-items: center; background: #272235; }
.weather { width: 572px; flex: none; display: flex; align-items: center; padding-left: 25px; position: relative; height: 100%; }
.weather-icon { width: 30px; height: 30px; margin-top: 8px; }
.weather-badge { position: absolute; left: 39px; top: 7px; width: 20px; height: 20px; border-radius: 50%; background: #ffa0b0; color: #222; font-size: 14px; text-align: center; line-height: 20px; }
.weather-text { display: flex; flex-direction: column; margin-left: 10px; font-size: 14px; line-height: 20px; }
.weather-temp { color: #fff; }
.weather-desc { color: #cfcfd4; font-size: 15px; }
.task-slot { width: 55px; height: 50px; flex: none; display: flex; align-items: center; justify-content: center; position: relative; }
.task-slot svg { width: 30px; height: 30px; margin-top: -2px; }
.task-start { width: 54px; }
.task-open::after { content: ""; position: absolute; left: 24px; bottom: -1px; width: 8px; height: 4px; border-radius: 2px; background: #8d8d93; }
.task-edge { background: #33303f; border: 1px solid #3e3b4a; border-radius: 6px; }
.task-edge::after { content: ""; position: absolute; left: 15px; bottom: 0; width: 19px; height: 4px; border-radius: 2px; background: #d3aed6; }
.task-badge { position: absolute; left: 30px; top: 2px; width: 19px; height: 19px; border-radius: 50%; background: #d3aed6; color: #222; font-size: 13px; text-align: center; line-height: 19px; }
.task-search { width: 275px; height: 40px; margin: 0 2px 0 5px; border-radius: 20px; background: #464350; border: 1px solid #55525f; display: flex; align-items: center; padding-left: 14px; }
.search-icon { width: 20px; height: 20px; }
.search-label { margin-left: 11px; font-size: 16.500px; color: #d8d8dc; }
.search-art { width: 54px; height: 40px; margin-left: auto; margin-right: 8px; }
.dell-text { font: 700 8px "Liberation Sans", sans-serif; fill: #f2f2f2; text-anchor: middle; }

.tray { margin-left: auto; width: 377px; flex: none; display: flex; align-items: center; height: 100%; font-size: 15px; color: #fff; }
.tray-chevron { width: 14px; height: 9px; margin-left: 13px; }
.tray-cloud { width: 22px; height: 16px; margin-left: 23px; }
.tray-lang { width: 56px; margin-left: 8px; display: flex; flex-direction: column; align-items: center; line-height: 20px; }
.tray-wifi { width: 22px; height: 18px; margin-left: 8px; }
.tray-vol { width: 20px; height: 16px; margin-left: 8px; }
.tray-batt { width: 22px; height: 16px; margin-left: 9px; }
.tray-clock { width: 92px; margin-left: 6px; display: flex; flex-direction: column; align-items: flex-end; line-height: 19px; font-size: 15.600px; }
.tray-bell { width: 20px; height: 22px; margin-left: 10px; }
```
